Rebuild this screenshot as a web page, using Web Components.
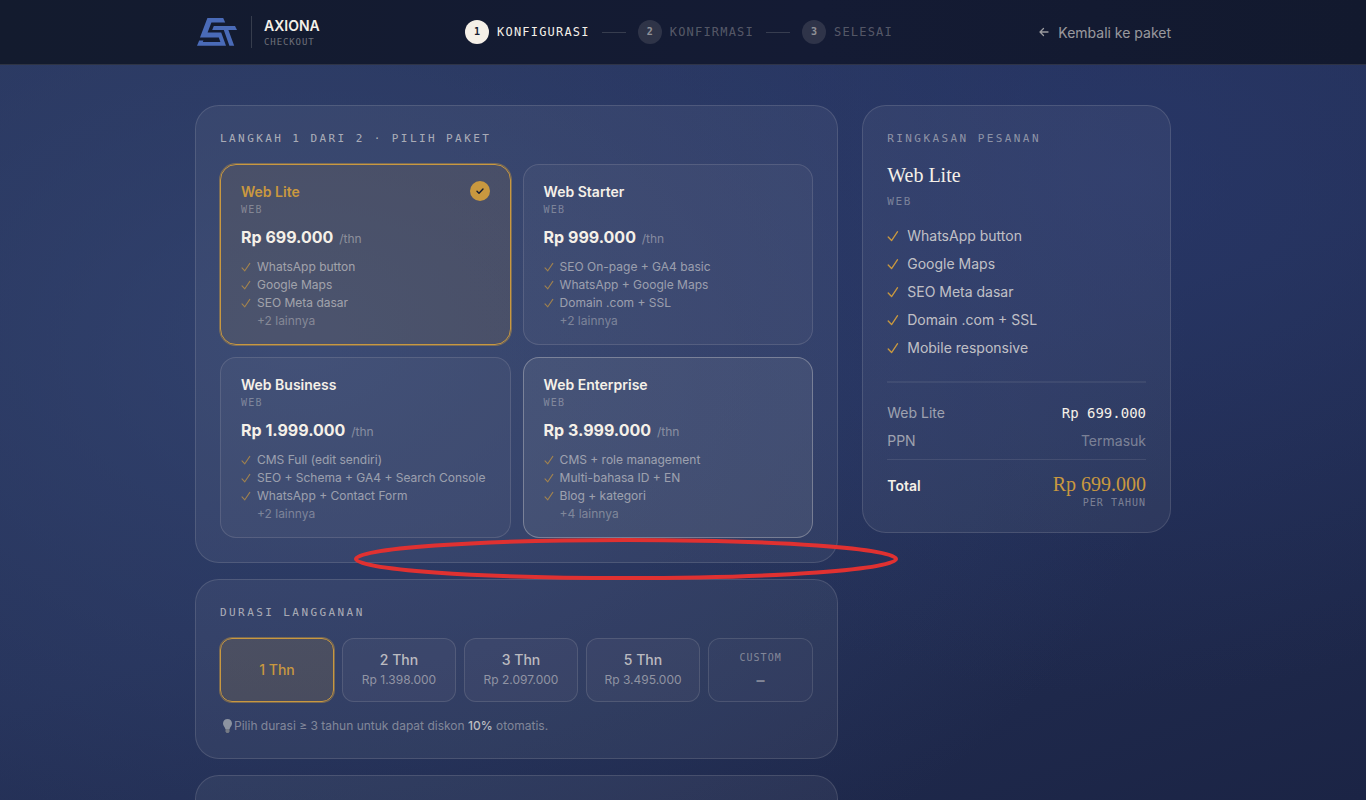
<!DOCTYPE html>
<html lang="id">
<head>
<meta charset="utf-8">
<meta name="viewport" content="width=device-width, initial-scale=1">
<title>Axiona Checkout</title>
<style>
  :root {
    --cream: #f5f0e8;
    --gold: #c9983f;
    --line: rgba(245, 240, 232, 0.13);
    --font-body: Inter, "Noto Sans", sans-serif;
    --font-mono: "DejaVu Sans Mono", monospace;
    --font-display: "Liberation Serif", serif;
  }
  body {
    margin: 0;
    background: #1f294b;
    color: var(--cream);
    font-family: var(--font-body);
    font-size: 14px;
  }
</style>
</head>
<body>
<checkout-page>
  <checkout-header slot="header"></checkout-header>

  <glass-panel heading="Langkah 1 dari 2 · Pilih paket">
    <plan-grid>
      <plan-card name="Web Lite" price="Rp 699.000" features="WhatsApp button|Google Maps|SEO Meta dasar" more="+2 lainnya" selected></plan-card>
      <plan-card name="Web Starter" price="Rp 999.000" features="SEO On-page + GA4 basic|WhatsApp + Google Maps|Domain .com + SSL" more="+2 lainnya"></plan-card>
      <plan-card name="Web Business" price="Rp 1.999.000" features="CMS Full (edit sendiri)|SEO + Schema + GA4 + Search Console|WhatsApp + Contact Form" more="+2 lainnya"></plan-card>
      <plan-card name="Web Enterprise" price="Rp 3.999.000" features="CMS + role management|Multi-bahasa ID + EN|Blog + kategori" more="+4 lainnya" active></plan-card>
    </plan-grid>
    <highlight-ring></highlight-ring>
  </glass-panel>

  <glass-panel heading="Durasi langganan">
    <duration-picker></duration-picker>
  </glass-panel>

  <glass-panel class="next"></glass-panel>

  <glass-panel slot="aside" heading="Ringkasan pesanan" muted>
    <order-summary></order-summary>
  </glass-panel>
</checkout-page>

<script>
(function () {
  function define(name, html, setup) {
    const template = document.createElement('template');
    template.innerHTML = html;
    customElements.define(name, class extends HTMLElement {
      constructor() {
        super();
        this.attachShadow({ mode: 'open' });
        this.shadowRoot.appendChild(template.content.cloneNode(true));
      }

      connectedCallback() {
        if (setup) setup(this, this.shadowRoot);
      }
    });
  }

  define('checkout-page', `
    <style>
      :host {
        display: block;
        height: 100vh;
        overflow: hidden;
        background:
          radial-gradient(ellipse 50% 65% at 82% 22%, rgba(42, 58, 112, 0.6), transparent),
          radial-gradient(ellipse 65% 80% at 22% 42%, rgba(54, 72, 118, 0.7), transparent),
          linear-gradient(160deg, #27345b 0%, #232f55 55%, #1b2445 100%);
      }
      main {
        box-sizing: border-box;
        max-width: 1024px;
        margin: 0 auto;
        padding: 40px 24px;
        display: grid;
        grid-template-columns: minmax(0, 25fr) minmax(0, 12fr);
        gap: 24px;
        align-items: start;
      }
      .steps {
        display: flex;
        flex-direction: column;
        gap: 16px;
      }
      ::slotted(.next) {
        min-height: 120px;
      }
    </style>
    <slot name="header"></slot>
    <main>
      <div class="steps"><slot></slot></div>
      <aside><slot name="aside"></slot></aside>
    </main>
  `);

  define('checkout-header', `
    <style>
      :host {
        display: block;
        background: linear-gradient(90deg, #131b2e, #141b34 60%, #12192e);
        border-bottom: 1px solid rgba(245, 240, 232, 0.12);
      }
      header {
        box-sizing: border-box;
        max-width: 1024px;
        height: 64px;
        margin: 0 auto;
        padding: 0 24px;
        display: flex;
        align-items: center;
        justify-content: space-between;
      }
      .brand {
        display: flex;
        align-items: center;
        gap: 12px;
      }
      .logo {
        display: block;
        width: 44px;
        height: 32px;
      }
      .brand-text {
        display: flex;
        flex-direction: column;
        border-left: 1px solid rgba(245, 240, 232, 0.16);
        padding-left: 12px;
      }
      .brand-name {
        font-size: 14px;
        line-height: 20px;
        font-weight: 600;
      }
      .brand-sub {
        font: 9px/12px var(--font-mono);
        letter-spacing: 0.1em;
        color: rgba(245, 240, 232, 0.4);
      }
      ol {
        display: flex;
        align-items: center;
        gap: 12px;
        margin: 0;
        padding: 0;
        list-style: none;
      }
      .bar {
        width: 24px;
        height: 1px;
        background: rgba(245, 240, 232, 0.16);
      }
      a {
        display: flex;
        align-items: center;
        gap: 8px;
        font-size: 14px;
        color: rgba(245, 240, 232, 0.6);
        text-decoration: none;
      }
      a svg {
        width: 12px;
        height: 12px;
      }
    </style>
    <header>
      <div class="brand">
        <svg class="logo" viewBox="0 0 44 32" fill="#4a6bb8" aria-hidden="true">
          <path d="M12.400 2H28.200L30.200 6.400H16.400L12.600 16.400H26.200L31 29.800H2L4.200 24.600H8.400L7.800 26H25.400L23.800 21.400H5Z"/>
          <path d="M18.800 10H40L42 14H33.400L39.200 29.800H34.400L28.800 14H17.200Z"/>
        </svg>
        <div class="brand-text">
          <span class="brand-name">AXIONA</span>
          <span class="brand-sub">CHECKOUT</span>
        </div>
      </div>
      <ol>
        <li><step-badge number="1" current>KONFIGURASI</step-badge></li>
        <li class="bar" role="presentation"></li>
        <li><step-badge number="2">KONFIRMASI</step-badge></li>
        <li class="bar" role="presentation"></li>
        <li><step-badge number="3">SELESAI</step-badge></li>
      </ol>
      <a href="#paket">
        <svg viewBox="0 0 12 12" fill="none" stroke="currentColor" stroke-width="1.300" stroke-linecap="round" stroke-linejoin="round" aria-hidden="true"><path d="M10 6H2M5.500 2.500L2 6L5.500 9.500"/></svg>
        Kembali ke paket
      </a>
    </header>
  `);

  define('step-badge', `
    <style>
      :host {
        display: flex;
        align-items: center;
        gap: 8px;
        font: 12px/16px var(--font-mono);
        letter-spacing: 0.1em;
        color: rgba(245, 240, 232, 0.3);
      }
      :host([current]) {
        color: var(--cream);
      }
      .dot {
        width: 24px;
        height: 24px;
        border-radius: 50%;
        background: rgba(245, 240, 232, 0.12);
        color: rgba(245, 240, 232, 0.5);
        font-size: 10px;
        font-weight: 700;
        line-height: 24px;
        letter-spacing: 0;
        text-align: center;
      }
      :host([current]) .dot {
        background: var(--cream);
        color: #151d33;
      }
    </style>
    <span class="dot"></span>
    <span><slot></slot></span>
  `, (host, root) => {
    root.querySelector('.dot').textContent = host.getAttribute('number');
  });

  define('glass-panel', `
    <style>
      :host {
        display: block;
        position: relative;
        box-sizing: border-box;
        padding: 24px;
        border: 1px solid var(--line);
        border-radius: 24px;
        background: rgba(245, 240, 232, 0.06);
      }
      h2 {
        margin: 0 0 16px;
        font: 11px/18px var(--font-mono);
        font-weight: 400;
        letter-spacing: 0.22em;
        text-transform: uppercase;
        color: rgba(245, 240, 232, 0.62);
      }
      :host([muted]) h2 {
        margin-bottom: 12px;
        color: rgba(245, 240, 232, 0.48);
      }
    </style>
    <h2></h2>
    <slot></slot>
  `, (host, root) => {
    const heading = root.querySelector('h2');
    if (host.hasAttribute('heading')) {
      heading.textContent = host.getAttribute('heading');
    } else {
      heading.remove();
    }
  });

  define('plan-grid', `
    <style>
      :host {
        display: grid;
        grid-template-columns: repeat(2, minmax(0, 1fr));
        gap: 12px;
      }
    </style>
    <slot></slot>
  `);

  define('check-mark', `
    <style>
      :host {
        display: block;
        flex: none;
        width: 10px;
        height: 10px;
        color: var(--gold);
      }
      svg {
        display: block;
        width: 100%;
        height: 100%;
      }
    </style>
    <svg viewBox="0 0 10 10" fill="none" stroke="currentColor" stroke-width="1.100" stroke-linecap="round" stroke-linejoin="round" aria-hidden="true"><path d="M1 5.800L3.800 8.800L8.800 1.400"/></svg>
  `);

  define('plan-card', `
    <style>
      :host {
        display: block;
      }
      button {
        box-sizing: border-box;
        display: flex;
        flex-direction: column;
        width: 100%;
        padding: 16px 20px 14px;
        border: 1px solid var(--line);
        border-radius: 16px;
        background: rgba(245, 240, 232, 0.04);
        color: var(--cream);
        font: inherit;
        text-align: left;
        cursor: pointer;
      }
      :host([active]) button {
        border-color: rgba(245, 240, 232, 0.3);
        background: rgba(245, 240, 232, 0.08);
      }
      :host([selected]) button {
        border-color: var(--gold);
        box-shadow: 0 0 0 1px rgba(201, 152, 63, 0.45);
        background: rgba(201, 152, 63, 0.12);
      }
      .top {
        display: flex;
        align-items: center;
        justify-content: space-between;
        height: 20px;
      }
      .name {
        font-size: 14px;
        font-weight: 600;
      }
      :host([selected]) .name {
        color: var(--gold);
      }
      .badge {
        display: none;
      }
      :host([selected]) .badge {
        display: block;
        width: 20px;
        height: 20px;
      }
      .kind {
        margin-top: 2px;
        font: 10px/14px var(--font-mono);
        letter-spacing: 0.12em;
        color: rgba(245, 240, 232, 0.35);
      }
      .price {
        margin-top: 8px;
        font-size: 16px;
        line-height: 24px;
        font-weight: 700;
      }
      .unit {
        margin-left: 2px;
        font-size: 12px;
        font-weight: 400;
        color: rgba(245, 240, 232, 0.4);
      }
      .features {
        display: flex;
        flex-direction: column;
        margin-top: 7px;
        font-size: 12px;
        line-height: 18px;
        color: rgba(245, 240, 232, 0.52);
      }
      .feature {
        display: flex;
        align-items: center;
        gap: 6px;
      }
      .feature check-mark {
        opacity: 0.7;
      }
      .more {
        padding-left: 16px;
        color: rgba(245, 240, 232, 0.35);
      }
    </style>
    <button type="button">
      <span class="top">
        <span class="name"></span>
        <svg class="badge" viewBox="0 0 20 20" aria-hidden="true">
          <circle cx="10" cy="10" r="10" fill="#c9983f"/>
          <path d="M7 10.300L9 12.300L13 8" fill="none" stroke="#151d33" stroke-width="1.400" stroke-linecap="round" stroke-linejoin="round"/>
        </svg>
      </span>
      <span class="kind">WEB</span>
      <span class="price"><span class="amount"></span> <span class="unit">/thn</span></span>
      <span class="features"></span>
    </button>
  `, (host, root) => {
    root.querySelector('button').setAttribute('aria-pressed', String(host.hasAttribute('selected')));
    root.querySelector('.name').textContent = host.getAttribute('name');
    root.querySelector('.amount').textContent = host.getAttribute('price');
    const list = root.querySelector('.features');
    host.getAttribute('features').split('|').forEach((text) => {
      const row = document.createElement('span');
      const label = document.createElement('span');
      row.className = 'feature';
      label.textContent = text;
      row.append(document.createElement('check-mark'), label);
      list.append(row);
    });
    const more = document.createElement('span');
    more.className = 'more';
    more.textContent = host.getAttribute('more');
    list.append(more);
  });

  define('duration-option', `
    <style>
      :host {
        display: block;
      }
      button {
        box-sizing: border-box;
        display: flex;
        flex-direction: column;
        align-items: center;
        justify-content: center;
        width: 100%;
        height: 64px;
        padding: 0;
        border: 1px solid var(--line);
        border-radius: 12px;
        background: rgba(245, 240, 232, 0.04);
        color: rgba(245, 240, 232, 0.7);
        font: 500 14px/20px var(--font-body);
        cursor: pointer;
      }
      :host([selected]) button {
        border-color: var(--gold);
        box-shadow: 0 0 0 1px rgba(201, 152, 63, 0.45);
        background: rgba(201, 152, 63, 0.15);
        color: var(--gold);
      }
      .price {
        font-size: 12px;
        font-weight: 400;
        color: rgba(245, 240, 232, 0.47);
      }
      .price:empty {
        display: none;
      }
    </style>
    <button type="button">
      <span><slot></slot></span>
      <span class="price"></span>
    </button>
  `, (host, root) => {
    root.querySelector('button').setAttribute('aria-pressed', String(host.hasAttribute('selected')));
    root.querySelector('.price').textContent = host.getAttribute('price') || '';
  });

  define('duration-picker', `
    <style>
      :host {
        display: block;
      }
      .options {
        display: grid;
        grid-template-columns: repeat(4, minmax(0, 13fr)) minmax(0, 12fr);
        gap: 8px;
      }
      .custom {
        box-sizing: border-box;
        display: flex;
        flex-direction: column;
        align-items: center;
        gap: 4px;
        height: 64px;
        padding-top: 11px;
        border: 1px solid var(--line);
        border-radius: 12px;
        background: rgba(245, 240, 232, 0.02);
      }
      .custom label {
        font: 10px/16px var(--font-mono);
        letter-spacing: 0.1em;
        color: rgba(245, 240, 232, 0.42);
      }
      .custom input {
        width: 48px;
        height: 20px;
        padding: 0;
        border: 0;
        background: none;
        color: rgba(245, 240, 232, 0.42);
        font: 700 16px/20px var(--font-body);
        text-align: center;
      }
      p {
        display: flex;
        align-items: center;
        margin: 16px 0 0;
        font-size: 12px;
        line-height: 16px;
        color: rgba(245, 240, 232, 0.42);
      }
      p svg {
        width: 14px;
        height: 16px;
      }
      strong {
        font-weight: 500;
        color: rgba(245, 240, 232, 0.72);
      }
    </style>
    <div class="options">
      <duration-option selected>1 Thn</duration-option>
      <duration-option price="Rp 1.398.000">2 Thn</duration-option>
      <duration-option price="Rp 2.097.000">3 Thn</duration-option>
      <duration-option price="Rp 3.495.000">5 Thn</duration-option>
      <div class="custom">
        <label for="years">CUSTOM</label>
        <input id="years" type="text" value="–">
      </div>
    </div>
    <p>
      <svg viewBox="0 0 14 16" aria-hidden="true">
        <path d="M7.500 1C4.900 1 3 3 3 5.400C3 7.600 4.800 8.600 5.400 11H9.600C10.200 8.600 12 7.600 12 5.400C12 3 10.100 1 7.500 1Z" fill="#8c93a0"/>
        <path d="M5.500 11H9.500V13.500L8.500 15H6.500L5.500 13.500Z" fill="#757a84"/>
      </svg>
      <span>Pilih durasi ≥ 3 tahun untuk dapat diskon <strong>10%</strong> otomatis.</span>
    </p>
  `);

  define('order-summary', `
    <style>
      :host {
        display: block;
      }
      h3 {
        margin: 0;
        font: 400 20px/30px var(--font-display);
      }
      .kind {
        margin: 4px 0 16px;
        font: 11px/16px var(--font-mono);
        letter-spacing: 0.15em;
        color: rgba(245, 240, 232, 0.38);
      }
      ul {
        display: flex;
        flex-direction: column;
        gap: 8px;
        margin: 0 0 23px;
        padding: 0;
        list-style: none;
        font-size: 14px;
        line-height: 20px;
        color: rgba(245, 240, 232, 0.74);
      }
      li {
        display: flex;
        align-items: center;
        gap: 8px;
      }
      li check-mark {
        width: 12px;
        height: 12px;
      }
      dl {
        margin: 0;
        padding-top: 20px;
        border-top: 2px solid rgba(245, 240, 232, 0.07);
        line-height: 20px;
      }
      .row {
        display: flex;
        justify-content: space-between;
        align-items: baseline;
        margin-bottom: 8px;
      }
      dt {
        color: rgba(245, 240, 232, 0.56);
      }
      dd {
        margin: 0;
        text-align: right;
      }
      .mono {
        font-family: var(--font-mono);
      }
      .dim {
        color: rgba(245, 240, 232, 0.4);
      }
      .total {
        margin: 0;
        padding-top: 10px;
        border-top: 1px solid rgba(245, 240, 232, 0.1);
      }
      .total dt {
        font-weight: 600;
        color: var(--cream);
      }
      .sum {
        display: block;
        font: 20px/28px var(--font-display);
        color: var(--gold);
      }
      .per {
        display: block;
        font: 10px/10px var(--font-mono);
        letter-spacing: 0.1em;
        color: rgba(245, 240, 232, 0.4);
      }
    </style>
    <h3>Web Lite</h3>
    <p class="kind">WEB</p>
    <ul>
      <li><check-mark></check-mark>WhatsApp button</li>
      <li><check-mark></check-mark>Google Maps</li>
      <li><check-mark></check-mark>SEO Meta dasar</li>
      <li><check-mark></check-mark>Domain .com + SSL</li>
      <li><check-mark></check-mark>Mobile responsive</li>
    </ul>
    <dl>
      <div class="row"><dt>Web Lite</dt><dd class="mono">Rp 699.000</dd></div>
      <div class="row"><dt>PPN</dt><dd class="dim">Termasuk</dd></div>
      <div class="row total">
        <dt>Total</dt>
        <dd><span class="sum">Rp 699.000</span><span class="per">PER TAHUN</span></dd>
      </div>
    </dl>
  `);

  // Hand-drawn style ring laid over the seam between the first two panels
  define('highlight-ring', `
    <style>
      :host {
        position: absolute;
        z-index: 1;
        left: 157px;
        bottom: -19px;
        width: 546px;
        height: 44px;
        pointer-events: none;
      }
      svg {
        display: block;
        width: 100%;
        height: 100%;
      }
    </style>
    <svg viewBox="0 0 546 44" fill="none" aria-hidden="true">
      <ellipse cx="273" cy="22" rx="270" ry="19" stroke="#e03131" stroke-width="4"/>
    </svg>
  `);
})();
</script>
</body>
</html>
